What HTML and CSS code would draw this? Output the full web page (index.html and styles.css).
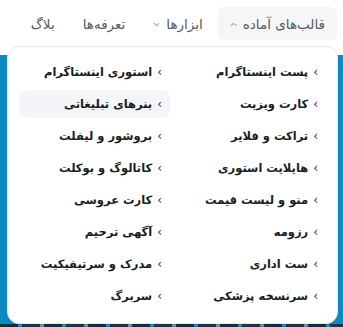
FILE: index.html
```html
<!DOCTYPE html>
<html lang="fa" dir="rtl">
<head>
<meta charset="utf-8">
<link rel="stylesheet" href="styles.css">
</head>
<body>
<header class="topbar">
  <nav class="nav">
    <a class="tab active">قالب‌های آماده <svg class="caret" viewBox="0 0 8 5" width="7" height="5"><path d="M1 4 L4 1 L7 4" fill="none" stroke="currentColor" stroke-width="1.1"/></svg></a>
    <a class="tab">ابزارها <svg class="caret" viewBox="0 0 8 5" width="7" height="5"><path d="M1 1 L4 4 L7 1" fill="none" stroke="currentColor" stroke-width="1.1"/></svg></a>
    <a class="tab">تعرفه‌ها</a>
    <a class="tab">بلاگ</a>
  </nav>
</header>
<main class="hero">
  <div class="hero-strip"></div>
</main>
<div class="dropdown">
  <ul class="menu">
    <li class="item"><span class="chev">›</span>پست اینستاگرام</li>
    <li class="item"><span class="chev">›</span>استوری اینستاگرام</li>
    <li class="item"><span class="chev">›</span>کارت ویزیت</li>
    <li class="item hover"><span class="chev">›</span>بنرهای تبلیغاتی</li>
    <li class="item"><span class="chev">›</span>تراکت و فلایر</li>
    <li class="item"><span class="chev">›</span>بروشور و لیفلت</li>
    <li class="item"><span class="chev">›</span>هایلایت استوری</li>
    <li class="item"><span class="chev">›</span>کاتالوگ و بوکلت</li>
    <li class="item"><span class="chev">›</span>منو و لیست قیمت</li>
    <li class="item"><span class="chev">›</span>کارت عروسی</li>
    <li class="item"><span class="chev">›</span>رزومه</li>
    <li class="item"><span class="chev">›</span>آگهی ترحیم</li>
    <li class="item"><span class="chev">›</span>ست اداری</li>
    <li class="item"><span class="chev">›</span>مدرک و سرتیفیکیت</li>
    <li class="item"><span class="chev">›</span>سرنسخه پزشکی</li>
    <li class="item"><span class="chev">›</span>سربرگ</li>
  </ul>
</div>
</body>
</html>
```
FILE: styles.css
```css
* { box-sizing: border-box; }
html, body { margin: 0; padding: 0; }
body {
  width: 343px;
  height: 327px;
  overflow: hidden;
  position: relative;
  direction: rtl;
  font-family: "DejaVu Sans", "Noto Sans", sans-serif;
  background: #ffffff;
}
.topbar {
  height: 55px;
  background: #ffffff;
  padding: 7px 6px 0 0;
}
.nav {
  display: flex;
  align-items: stretch;
  height: 33px;
  gap: 2px;
}
.tab {
  display: flex;
  align-items: center;
  gap: 6px;
  padding: 0 13px;
  font-size: 13.5px;
  color: #555a60;
  white-space: nowrap;
  border-radius: 6px;
}
.tab.active { background: #f5f6f8; padding: 0 12px 0 12px; }
.caret { color: #777; margin-top: 1px; }
.hero {
  height: 272px;
  background: #0a89c3;
  position: relative;
}
.hero-strip {
  position: absolute;
  left: 0; right: 0; bottom: 0;
  height: 3px;
  background: repeating-linear-gradient(90deg, #1b2a3a 0 18px, #0a89c3 18px 22px, #24323f 22px 40px, #6d8aa0 40px 44px);
}
.dropdown {
  position: absolute;
  top: 46px;
  left: 7px;
  width: 331px;
  height: 278px;
  background: #ffffff;
  border: 1px solid #e6e8eb;
  border-radius: 12px;
  padding: 11px 11px 0 11px;
}
.menu {
  list-style: none;
  margin: 0;
  padding: 0;
  display: grid;
  grid-template-columns: 151px 151px;
  column-gap: 5px;
  row-gap: 4px;
}
.item {
  height: 28px;
  display: flex;
  align-items: center;
  gap: 5px;
  padding: 0 8px;
  border-radius: 8px;
  font-size: 11.5px;
  font-weight: bold;
  color: #1a1d21;
  white-space: nowrap;
}
.item.hover { background: #f3f5f8; }
.chev { font-weight: normal; font-size: 12px; color: #333; }
```
